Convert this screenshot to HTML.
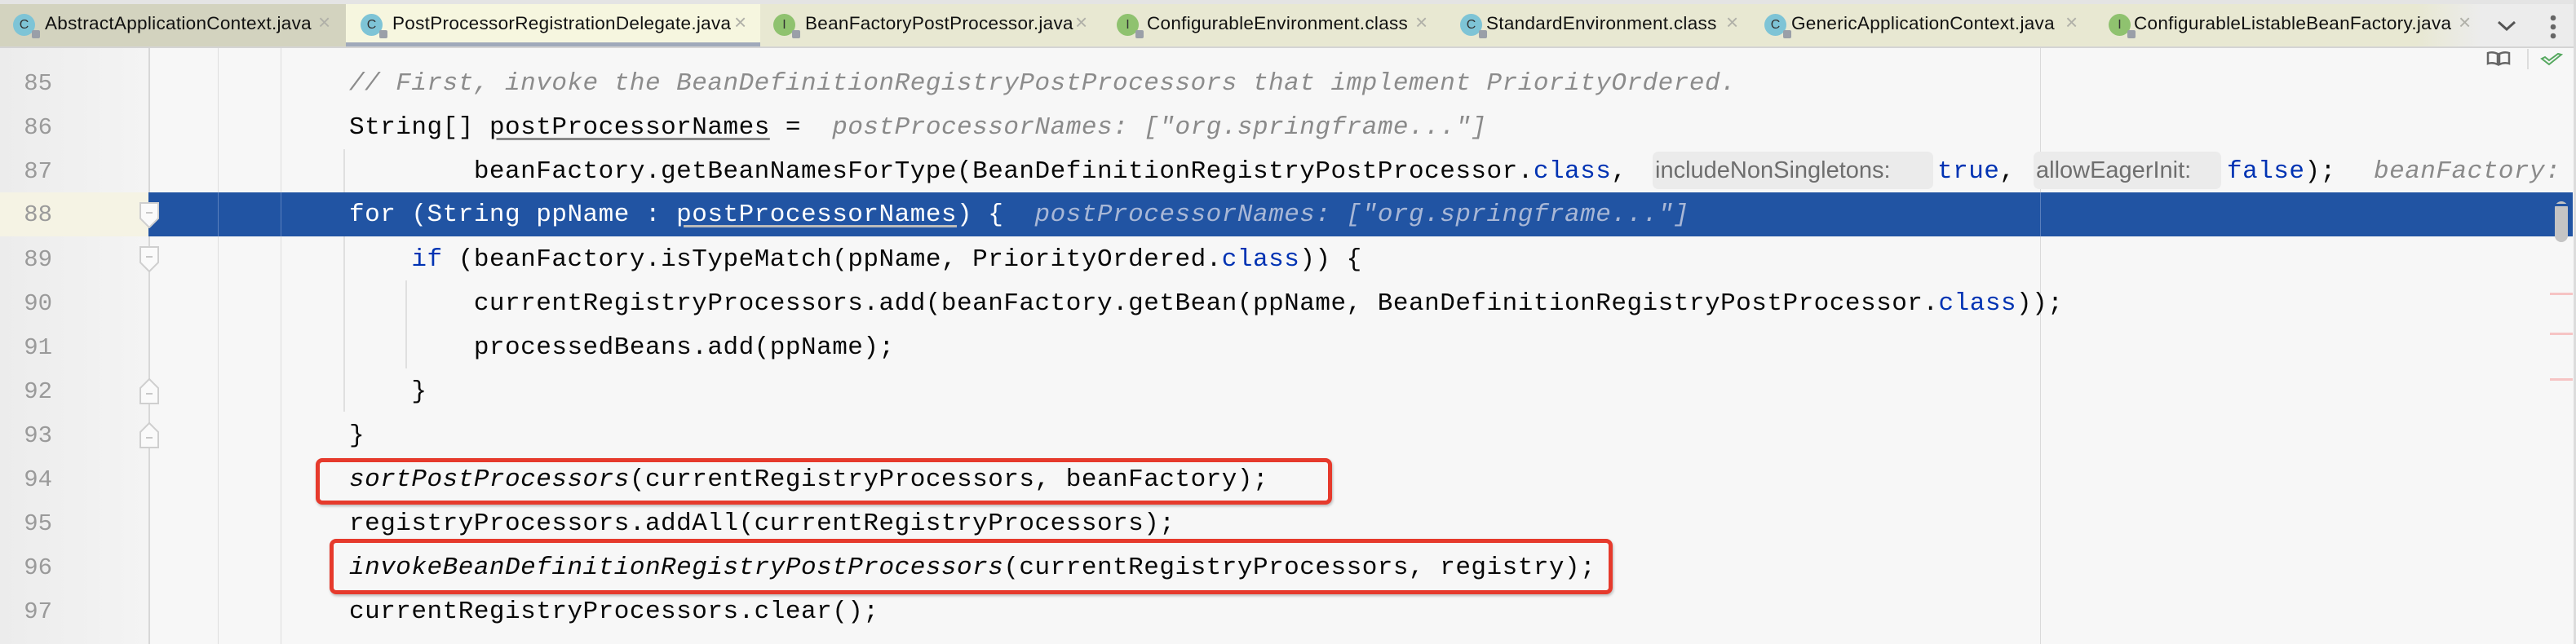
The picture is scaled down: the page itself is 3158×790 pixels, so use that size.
<!DOCTYPE html>
<html><head><meta charset="utf-8"><style>
*{margin:0;padding:0;box-sizing:border-box}
body{width:3158px;height:790px;overflow:hidden;background:#f7f7f7;position:relative;font-family:"Liberation Mono",monospace}
.a{position:absolute}
.tabbar{left:0;top:0;width:3158px;height:59px;background:#ececec;border-top:5px solid #e4e4e4;border-bottom:2px solid #d4d4d4}
.tab{position:absolute;top:5px;height:52px}
.tl{position:absolute;top:16px;font-family:"Liberation Sans",sans-serif;font-size:22.5px;color:#111;white-space:nowrap;letter-spacing:0.3px}
.tx{position:absolute;top:12px;font-family:"Liberation Sans",sans-serif;font-size:26px;color:#b0b0a8}
.ic{position:absolute;top:17px;width:27px;height:27px;border-radius:50%;font-family:"Liberation Sans",sans-serif;font-size:16px;text-align:center;line-height:27px;color:#333}
.ic.c{background:#7ec4d6}.ic.i{background:#8fc26f}
.ic::after{content:"";position:absolute;right:-6px;bottom:-3px;width:10px;height:10px;background:#9a9fa8;border-radius:2px}
.ln{position:absolute;left:0;width:64px;text-align:right;font-size:29px;color:#9a9a9a;line-height:54px;height:54px}
.code{position:absolute;left:428px;font-size:31px;letter-spacing:0.5px;line-height:54px;height:54px;white-space:pre;color:#080808}
.k{color:#0033b3}.cm{color:#8c8c8c;font-style:italic}.h{color:#8a8a8a;font-style:italic}
.u{text-decoration:underline;text-decoration-color:#888;text-underline-offset:5px}
.it{font-style:italic}
.hb{position:absolute;top:186px;height:46px;background:#ebebeb;border-radius:7px;font-family:"Liberation Sans",sans-serif;font-size:29px;color:#6e6e6e;line-height:46px;padding-left:3px;white-space:nowrap;overflow:hidden}
.fold{position:absolute;left:171px}
.rb{position:absolute;border:5px solid #e63a2c;border-radius:8px;box-shadow:1px 2px 3px rgba(0,0,0,.25)}
</style></head><body>
<div class="a tabbar"></div>
<div class="tab" style="left:0;width:424px;background:#d3d3bf"></div>
<div class="tab" style="left:424px;width:508px;background:#f6f6df;border-bottom:5px solid #a0a9ba"></div>
<div class="tab" style="left:932px;width:2110px;background:linear-gradient(90deg,#e8e8d2 0,#e8e8d2 2030px,#ececec 2110px)"></div>
<div class="ic c" style="left:16px">C</div><div class="tl" style="left:55px">AbstractApplicationContext.java</div><div class="tx" style="left:390px">×</div>
<div class="ic c" style="left:442px">C</div><div class="tl" style="left:481px">PostProcessorRegistrationDelegate.java</div><div class="tx" style="left:900px">×</div>
<div class="ic i" style="left:948px">I</div><div class="tl" style="left:987px">BeanFactoryPostProcessor.java</div><div class="tx" style="left:1318px">×</div>
<div class="ic i" style="left:1369px">I</div><div class="tl" style="left:1406px">ConfigurableEnvironment.class</div><div class="tx" style="left:1735px">×</div>
<div class="ic c" style="left:1790px">C</div><div class="tl" style="left:1822px">StandardEnvironment.class</div><div class="tx" style="left:2116px">×</div>
<div class="ic c" style="left:2163px">C</div><div class="tl" style="left:2196px">GenericApplicationContext.java</div><div class="tx" style="left:2532px">×</div>
<div class="ic i" style="left:2585px">I</div><div class="tl" style="left:2616px">ConfigurableListableBeanFactory.java</div><div class="tx" style="left:3014px">×</div>
<svg class="a" style="left:3060px;top:24px" width="26" height="16"><path d="M3 3 L13 12 L23 3" fill="none" stroke="#555" stroke-width="3"/></svg>
<svg class="a" style="left:3122px;top:16px" width="16" height="34"><circle cx="8" cy="6" r="3.3" fill="#666"/><circle cx="8" cy="17" r="3.3" fill="#666"/><circle cx="8" cy="28" r="3.3" fill="#666"/></svg>
<div class="a" style="left:3155px;top:0;width:3px;height:790px;background:#dcdcdc"></div>

<div class="a" style="left:0;top:59px;width:182px;height:731px;background:linear-gradient(90deg,#ececec,#f4f4f4)"></div>
<div class="a" style="left:182px;top:59px;width:2px;height:731px;background:#d8d8d8"></div>
<div class="a" style="left:267px;top:59px;width:1px;height:731px;background:#dedede"></div>
<div class="a" style="left:344px;top:59px;width:1px;height:731px;background:#dedede"></div>
<div class="a" style="left:2501px;top:59px;width:1px;height:731px;background:#dadada"></div>
<div class="a" style="left:0;top:236px;width:182px;height:54px;background:#f5f3e4"></div>
<div class="a" style="left:182px;top:236px;width:2972px;height:54px;background:#2154a3"></div>
<div class="a" style="left:267px;top:236px;width:1px;height:54px;background:#5a7fbd"></div>
<div class="a" style="left:344px;top:236px;width:1px;height:54px;background:#5a7fbd"></div>
<div class="a" style="left:2501px;top:236px;width:1px;height:54px;background:#5a7fbd"></div>
<div class="a" style="left:421px;top:183px;width:2px;height:53px;background:#e0e0e0"></div>
<div class="a" style="left:421px;top:290px;width:2px;height:215px;background:#e0e0e0"></div>
<div class="a" style="left:497px;top:344px;width:2px;height:108px;background:#e0e0e0"></div>

<svg class="fold" style="top:248px" width="24" height="32"><path d="M1 1 H23 V20 L12 31 L1 20 Z" fill="#fafafa" stroke="#cfcfcf" stroke-width="2"/><path d="M8 13 H16" stroke="#c8c8c8" stroke-width="2"/></svg>
<svg class="fold" style="top:302px" width="24" height="32"><path d="M1 1 H23 V20 L12 31 L1 20 Z" fill="#fafafa" stroke="#cfcfcf" stroke-width="2"/><path d="M8 13 H16" stroke="#c8c8c8" stroke-width="2"/></svg>
<svg class="fold" style="top:464px" width="24" height="32"><path d="M12 1 L23 12 V31 H1 V12 Z" fill="#fafafa" stroke="#cfcfcf" stroke-width="2"/><path d="M8 19 H16" stroke="#c8c8c8" stroke-width="2"/></svg>
<svg class="fold" style="top:518px" width="24" height="32"><path d="M12 1 L23 12 V31 H1 V12 Z" fill="#fafafa" stroke="#cfcfcf" stroke-width="2"/><path d="M8 19 H16" stroke="#c8c8c8" stroke-width="2"/></svg>

<div class="ln" style="top:76px">85</div>
<div class="ln" style="top:130px">86</div>
<div class="ln" style="top:184px">87</div>
<div class="ln" style="top:237px">88</div>
<div class="ln" style="top:292px">89</div>
<div class="ln" style="top:346px">90</div>
<div class="ln" style="top:400px">91</div>
<div class="ln" style="top:454px">92</div>
<div class="ln" style="top:508px">93</div>
<div class="ln" style="top:562px">94</div>
<div class="ln" style="top:616px">95</div>
<div class="ln" style="top:670px">96</div>
<div class="ln" style="top:724px">97</div>

<div class="code cm" style="top:76px">// First, invoke the BeanDefinitionRegistryPostProcessors that implement PriorityOrdered.</div>
<div class="code" style="top:130px">String[] <span class="u">postProcessorNames</span> =  <span class="h">postProcessorNames: ["org.springframe..."]</span></div>
<div class="code" style="top:184px">        beanFactory.getBeanNamesForType(BeanDefinitionRegistryPostProcessor.<span class="k">class</span>,</div>
<div class="hb" style="left:2026px;width:344px">includeNonSingletons:</div>
<div class="code k" style="top:184px;left:2375px">true<span style="color:#080808">,</span></div>
<div class="hb" style="left:2493px;width:230px">allowEagerInit:</div>
<div class="code k" style="top:184px;left:2730px">false<span style="color:#080808">);</span></div>
<div class="code h" style="top:184px;left:2910px">beanFactory:</div>
<div class="code" style="top:237px;color:#fff">for (String ppName : <span class="u" style="text-decoration-color:#bbb">postProcessorNames</span>) {  <span style="font-style:italic;color:#a8b7d6">postProcessorNames: ["org.springframe..."]</span></div>
<div class="code" style="top:292px">    <span class="k">if</span> (beanFactory.isTypeMatch(ppName, PriorityOrdered.<span class="k">class</span>)) {</div>
<div class="code" style="top:346px">        currentRegistryProcessors.add(beanFactory.getBean(ppName, BeanDefinitionRegistryPostProcessor.<span class="k">class</span>));</div>
<div class="code" style="top:400px">        processedBeans.add(ppName);</div>
<div class="code" style="top:454px">    }</div>
<div class="code" style="top:508px">}</div>
<div class="code" style="top:562px"><span class="it">sortPostProcessors</span>(currentRegistryProcessors, beanFactory);</div>
<div class="code" style="top:616px">registryProcessors.addAll(currentRegistryProcessors);</div>
<div class="code" style="top:670px"><span class="it">invokeBeanDefinitionRegistryPostProcessors</span>(currentRegistryProcessors, registry);</div>
<div class="code" style="top:724px">currentRegistryProcessors.clear();</div>

<div class="rb" style="left:387px;top:562px;width:1246px;height:57px"></div>
<div class="rb" style="left:404px;top:661px;width:1573px;height:68px"></div>

<svg class="a" style="left:3048px;top:62px" width="30" height="20"><path d="M2 3 Q8 1 14 4 L14 17 Q8 14 2 16 Z M28 3 Q22 1 16 4 L16 17 Q22 14 28 16 Z" fill="none" stroke="#666" stroke-width="2.5"/></svg>
<div class="a" style="left:3098px;top:60px;width:2px;height:25px;background:#ddd"></div>
<svg class="a" style="left:3114px;top:64px" width="28" height="18"><path d="M2 8 L11 15 L26 3 L22 2 L11 10 L6 6 Z" fill="none" stroke="#55a85f" stroke-width="2"/></svg>
<div class="a" style="left:3132px;top:247px;width:16px;height:50px;background:#c4c4c4;border-radius:8px"></div>
<div class="a" style="left:3126px;top:250px;width:28px;height:3px;background:#2154a3"></div>
<div class="a" style="left:3126px;top:359px;width:28px;height:3px;background:#f6c4c4"></div>
<div class="a" style="left:3126px;top:408px;width:28px;height:3px;background:#f6c4c4"></div>
<div class="a" style="left:3126px;top:464px;width:28px;height:3px;background:#f6c4c4"></div>
</body></html>
